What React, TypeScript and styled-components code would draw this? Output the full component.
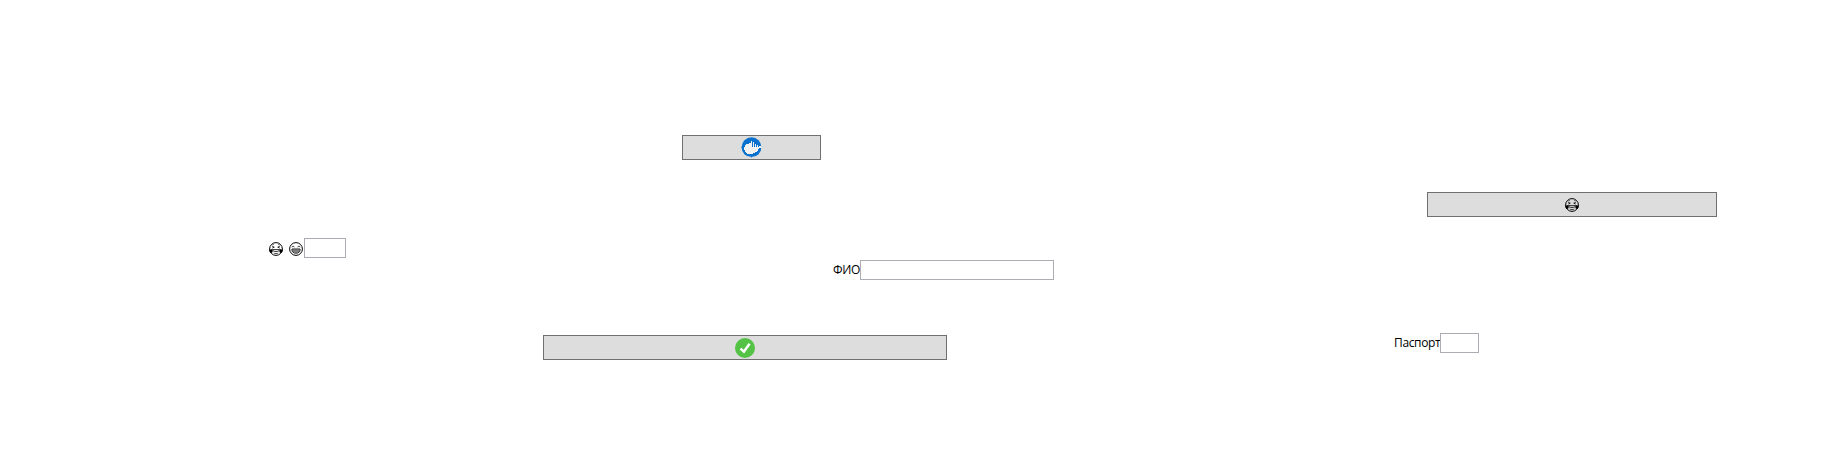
import React from 'react';
import styled, { createGlobalStyle } from 'styled-components';

const GlobalStyle = createGlobalStyle`
  * { box-sizing: border-box; }
  body { margin: 0; background: #fff; }
`;

const Window = styled.main`
  display: flex;
  flex-direction: column;
  width: 1823px;
  height: 470px;
  padding-top: 135px;
  overflow: hidden;
  background: #fff;
  color: #000;
  font: 12px/16px 'Open Sans', 'Noto Sans', sans-serif;
`;

const Row = styled.div<{ $gap: number }>`
  display: flex;
  align-items: flex-start;
  margin-bottom: ${(p) => p.$gap}px;
`;

const Button = styled.button<{ $indent: number; $width: number; $drop?: number }>`
  display: flex;
  flex: none;
  align-items: center;
  justify-content: center;
  width: ${(p) => p.$width}px;
  height: 25px;
  margin: ${(p) => p.$drop ?? 0}px 0 0 ${(p) => p.$indent}px;
  padding: 0;
  border: 1px solid #707070;
  border-radius: 0;
  background: #ddd;
`;

const Field = styled.label<{ $indent: number; $drop?: number }>`
  display: flex;
  flex: none;
  margin: ${(p) => p.$drop ?? 0}px 0 0 ${(p) => p.$indent}px;
`;

const Caption = styled.span<{ $width: number }>`
  width: ${(p) => p.$width}px;
  height: 20px;
  padding-top: 2px;
  white-space: nowrap;
  letter-spacing: -0.35px;
`;

const Faces = styled.span`
  display: flex;
  gap: 6px;
  width: 35px;
  padding-top: 4px;
`;

const Input = styled.input<{ $width: number }>`
  width: ${(p) => p.$width}px;
  height: 20px;
  margin: 0;
  padding: 0 2px;
  border: 1px solid #abadb3;
  border-radius: 0;
  background: #fff;
  font: inherit;
`;

const Icon = styled.svg<{ $size: number }>`
  display: block;
  flex: none;
  width: ${(p) => p.$size}px;
  height: ${(p) => p.$size}px;
`;

const JoyFace = () => (
  <Icon $size={14} viewBox="0 0 14 14" fill="none" stroke="#000">
    <circle cx="7" cy="7" r="6.4" />
    <path d="M3.2 4.3l2.1.9-2.1.9M10.8 4.3l-2.1.9 2.1.9" strokeWidth=".8" />
    <path d="M3.4 3l1.5-.6M10.6 3l-1.5-.6" strokeWidth=".6" />
    <path d="M3.700 7.600h6.600c0 1.200-1.200 1.900-3.300 1.900s-3.300-.7-3.300-1.900z" strokeWidth=".8" />
    <path d="M4.700 11c1.200.8 3.400.8 4.600 0" strokeWidth=".7" />
    <path d="M.2 7.800L3.400 7l.3 2.300c-.3 1.900-2 2.200-2.900.8zM13.800 7.800L10.600 7l-.3 2.300c.3 1.900 2 2.200 2.900.8z" fill="#000" stroke="none" />
  </Icon>
);

const GrinFace = () => (
  <Icon $size={14} viewBox="0 0 14 14" fill="none" stroke="#000">
    <circle cx="7" cy="7" r="6.4" />
    <path d="M3 5.3c.3-1.400 1.900-1.400 2.300 0M8.700 5.300c.4-1.400 2-1.400 2.300 0" strokeWidth=".8" />
    <path d="M3 7h8v1.500c-.3 1.700-1.800 2.700-4 2.700s-3.700-1-4-2.700z" strokeWidth=".9" />
    <path d="M3 9h8M5 7v3.700M7 7v4M9 7v3.700" strokeWidth=".6" />
  </Icon>
);

const WhaleIcon = () => (
  <Icon $size={21} viewBox="0 0 21 21">
    <path d="M0 10h1v1H0zM20 10h1v1h-1zM10 20h1v1h-1z" fill="#82b4dd" />
    <circle cx="10.5" cy="10.200" r="9.900" fill="#0872ce" />
    <path d="M3 10h1V8h1V7h3V6h2V4h1v6h1V5h1v5h1V7h1v3h1V8h1v2h1V9h2v1h1v1h-3v1h-1v2h-1v1h-2v1h-2v1H6v-1H5v-1H4v-2H3z" fill="#f2f2f2" />
  </Icon>
);

const CheckIcon = () => (
  <Icon $size={20} viewBox="0 0 20 20">
    <circle cx="10" cy="10" r="10" fill="#54c345" />
    <path d="M5.5 10.6l3.400 3 5.700-7.900" fill="none" stroke="#fff" strokeWidth="2.500" />
  </Icon>
);

export default function App() {
  return (
    <Window>
      <GlobalStyle />
      <Row $gap={32}>
        <Button $indent={682} $width={139} aria-label="Docker"><WhaleIcon /></Button>
      </Row>
      <Row $gap={21}>
        <Button $indent={1427} $width={290} aria-label="Joy"><JoyFace /></Button>
      </Row>
      <Row $gap={53}>
        <Field $indent={269}>
          <Faces><JoyFace /><GrinFace /></Faces>
          <Input $width={42} />
        </Field>
        <Field $indent={487} $drop={22}>
          <Caption $width={27}>ФИО</Caption>
          <Input $width={194} />
        </Field>
      </Row>
      <Row $gap={0}>
        <Button $indent={543} $width={404} $drop={2} aria-label="OK"><CheckIcon /></Button>
        <Field $indent={447}>
          <Caption $width={46}>Паспорт</Caption>
          <Input $width={39} />
        </Field>
      </Row>
    </Window>
  );
}
